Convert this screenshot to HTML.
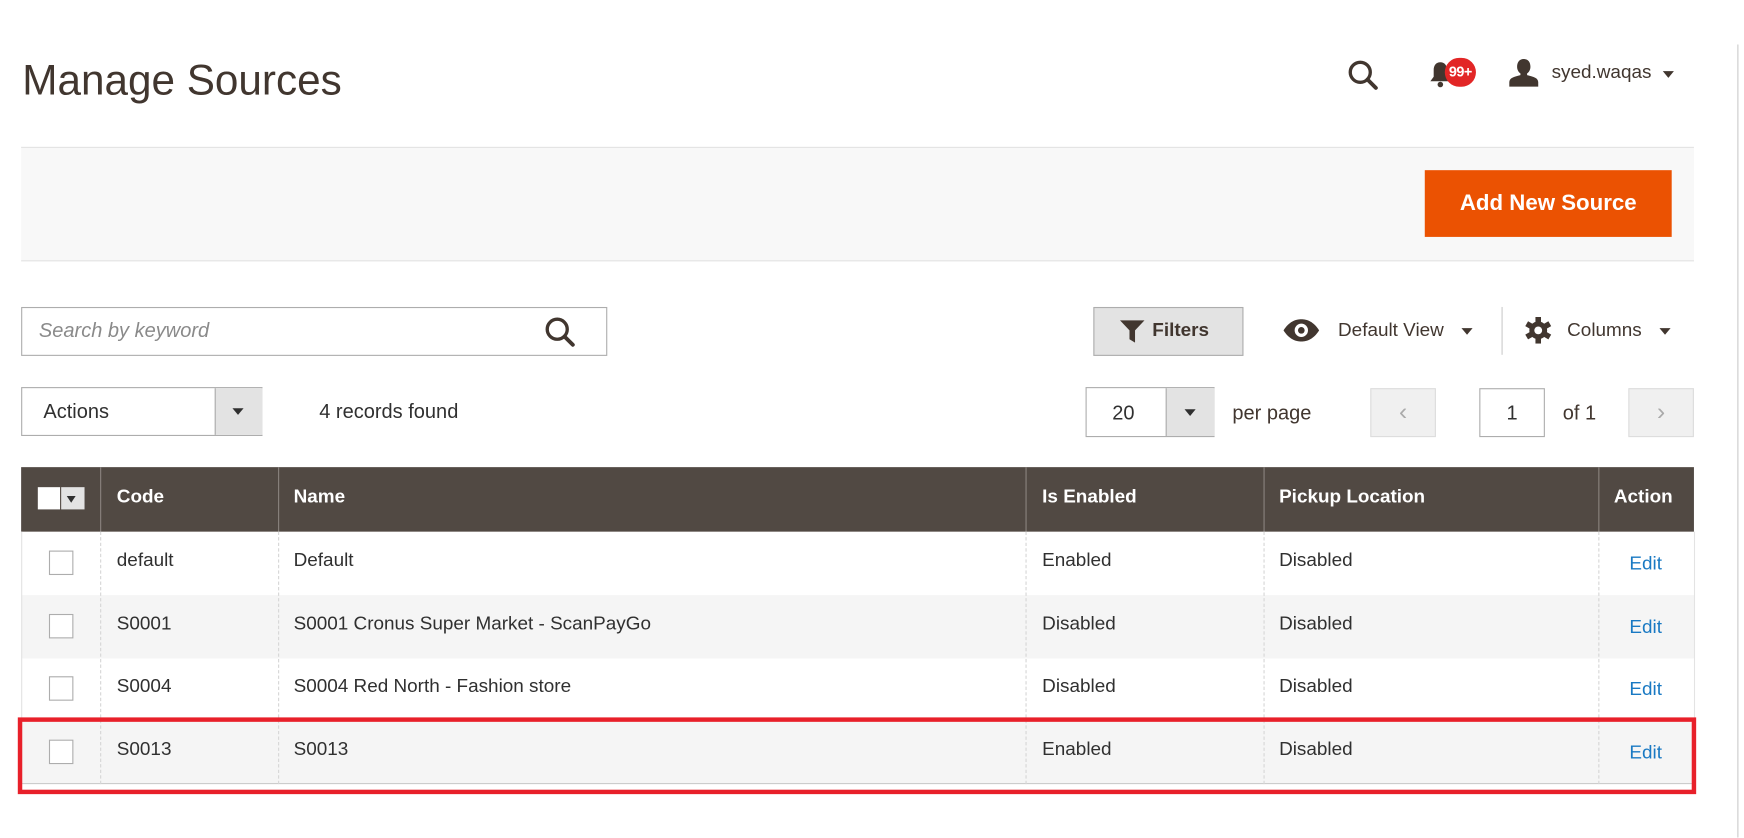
<!DOCTYPE html>
<html><head><meta charset="utf-8"><style>
html,body{margin:0;padding:0;background:#fff;width:1744px;height:838px;overflow:hidden}
#w{position:absolute;left:0;top:0;width:1568px;height:753px;transform:scale(1.11224);transform-origin:0 0;font-family:"Liberation Sans",sans-serif;color:#303030}
.a{position:absolute}
.t{font-size:17px;line-height:20px;white-space:nowrap}
.caret{position:absolute;width:0;height:0;border-left:5px solid transparent;border-right:5px solid transparent;border-top:6px solid #41362f}
.cb{position:absolute;left:44px;width:20px;height:20px;border:1px solid #adadad;background:#fff}
.vl{position:absolute;top:478px;height:227px;border-left:1px dashed #d6d6d6}
.hl{position:absolute;top:420px;height:58px;border-left:1px solid #8a837e}
.th{position:absolute;top:437px;color:#fff;font-weight:bold;font-size:17px}
.edit{color:#1979c3}
</style></head><body><div id="w">
<div class="a" style="left:20px;top:50px;font-size:38px;color:#41362f;line-height:46px">Manage Sources</div>
<div class="a" style="left:1562px;top:40px;width:1px;height:713px;background:#ccc"></div>
<svg class="a" style="left:1210px;top:52px" width="32" height="32" viewBox="0 0 32 32"><circle cx="13" cy="13" r="9" fill="none" stroke="#41362f" stroke-width="3"/><line x1="19.5" y1="19.5" x2="27" y2="27" stroke="#41362f" stroke-width="3.5" stroke-linecap="round"/></svg>
<svg class="a" style="left:1284px;top:54px" width="22" height="26" viewBox="0 0 22 26"><path d="M11 2c-4 0-6 3-6 7v6l-3 4h18l-3-4V9c0-4-2-7-6-7z" fill="#41362f"/><circle cx="11" cy="22" r="2.5" fill="#41362f"/></svg>
<div class="a" style="left:1299px;top:52px;width:28px;height:26px;border-radius:13px;background:#e22626;color:#fff;font-weight:bold;font-size:13px;line-height:26px;text-align:center;letter-spacing:-0.5px">99+</div>
<svg class="a" style="left:1356px;top:52px" width="28" height="26" viewBox="0 0 28 26"><path d="M14 1c-4 0-6 3-6 7 0 3 1.5 5 3 6v1.5C5 17 1 18 1 22v4h26v-4c0-4-4-5-10-6.5V14c1.5-1 3-3 3-6 0-4-2-7-6-7z" fill="#41362f"/></svg>
<div class="a t" style="left:1395px;top:55px;color:#41362f">syed.waqas</div>
<div class="caret" style="left:1495px;top:64px"></div>
<div class="a" style="left:19px;top:132px;width:1504px;height:101px;background:#f8f8f8;border-top:1px solid #e3e3e3;border-bottom:1px solid #e3e3e3"></div>
<div class="a" style="left:1281px;top:153px;width:222px;height:60px;background:#eb5202;color:#fff;font-weight:bold;font-size:20px;line-height:60px;text-align:center">Add New Source</div>
<div class="a" style="left:19px;top:276px;width:525px;height:42px;border:1px solid #adadad"></div>
<div class="a t" style="left:35px;top:287px;font-style:italic;color:#8a8a8a;font-size:18px">Search by keyword</div>
<svg class="a" style="left:488px;top:283px" width="32" height="32" viewBox="0 0 32 32"><circle cx="13" cy="13" r="9" fill="none" stroke="#41362f" stroke-width="3"/><line x1="19.5" y1="19.5" x2="27" y2="27" stroke="#41362f" stroke-width="3.5" stroke-linecap="round"/></svg>
<div class="a" style="left:983px;top:276px;width:133px;height:42px;background:#e3e3e3;border:1px solid #adadad"></div>
<svg class="a" style="left:1006px;top:287px" width="24" height="22" viewBox="0 0 24 22"><path d="M1 1h22l-8.5 9v11l-5-3v-8z" fill="#41362f"/></svg>
<div class="a t" style="left:1036px;top:287px;color:#41362f;font-weight:bold">Filters</div>
<svg class="a" style="left:1153px;top:286px" width="34" height="22" viewBox="0 0 34 22"><path d="M1 11C6 3 12 1 17 1s11 2 16 10c-5 8-11 10-16 10S6 19 1 11z" fill="#41362f"/><circle cx="17" cy="11" r="6" fill="#fff"/><circle cx="17" cy="11" r="3" fill="#41362f"/></svg>
<div class="a t" style="left:1203px;top:287px;color:#41362f">Default View</div>
<div class="caret" style="left:1314px;top:295px"></div>
<div class="a" style="left:1350px;top:276px;width:1px;height:43px;background:#ccc"></div>
<svg class="a" style="left:1371px;top:285px" width="24" height="24" viewBox="0 0 24 24"><g fill="#41362f"><rect x="9.5" y="0" width="5" height="24"/><rect x="9.5" y="0" width="5" height="24" transform="rotate(60 12 12)"/><rect x="9.5" y="0" width="5" height="24" transform="rotate(120 12 12)"/><circle cx="12" cy="12" r="8"/></g><circle cx="12" cy="12" r="3.5" fill="#fff"/></svg>
<div class="a t" style="left:1409px;top:287px;color:#41362f">Columns</div>
<div class="caret" style="left:1492px;top:295px"></div>
<div class="a" style="left:19px;top:348px;width:215px;height:42px;border:1px solid #adadad;background:#fff"></div>
<div class="a" style="left:193px;top:349px;width:42px;height:42px;background:#e3e3e3;border-left:1px solid #adadad"></div>
<div class="caret" style="left:209px;top:367px;border-top-color:#303030"></div>
<div class="a t" style="left:39px;top:360px;font-size:18px">Actions</div>
<div class="a t" style="left:287px;top:360px;font-size:18px">4 records found</div>
<div class="a" style="left:976px;top:348px;width:114px;height:43px;border:1px solid #adadad;background:#fff"></div>
<div class="a" style="left:1048px;top:349px;width:43px;height:43px;background:#e3e3e3;border-left:1px solid #adadad"></div>
<div class="caret" style="left:1065px;top:368px;border-top-color:#303030"></div>
<div class="a t" style="left:1000px;top:361px;font-size:18px">20</div>
<div class="a t" style="left:1108px;top:361px;font-size:18px;color:#41362f">per page</div>
<div class="a" style="left:1232px;top:349px;width:57px;height:42px;background:#f0f0f0;border:1px solid #ddd;color:#aaa;font-size:22px;line-height:40px;text-align:center">&#8249;</div>
<div class="a" style="left:1330px;top:349px;width:57px;height:42px;border:1px solid #adadad;text-align:center;font-size:18px;line-height:42px">1</div>
<div class="a t" style="left:1405px;top:361px;font-size:18px;color:#41362f">of 1</div>
<div class="a" style="left:1464px;top:349px;width:57px;height:42px;background:#f0f0f0;border:1px solid #ddd;color:#aaa;font-size:22px;line-height:40px;text-align:center">&#8250;</div>
<div class="a" style="left:19px;top:420px;width:1504px;height:58px;background:#514943"></div>
<div class="a" style="left:19px;top:535px;width:1504px;height:57px;background:#f5f5f5"></div>
<div class="a" style="left:19px;top:649px;width:1504px;height:56px;background:#f5f5f5"></div>
<div class="a" style="left:19px;top:478px;width:1503px;height:226px;border-left:1px solid #e3e3e3;border-right:1px solid #e3e3e3;border-bottom:1px solid #ccc"></div>
<div class="hl" style="left:90px"></div><div class="hl" style="left:250px"></div><div class="hl" style="left:922px"></div><div class="hl" style="left:1136px"></div><div class="hl" style="left:1437px"></div>
<div class="vl" style="left:90px"></div><div class="vl" style="left:250px"></div><div class="vl" style="left:922px"></div><div class="vl" style="left:1136px"></div><div class="vl" style="left:1437px"></div>
<div class="a" style="left:34px;top:438px;width:20px;height:20px;background:#fff"></div>
<div class="a" style="left:55px;top:438px;width:21px;height:20px;background:#e3e3e3"></div>
<div class="caret" style="left:60px;top:446px;border-top-color:#303030;border-left-width:4px;border-right-width:4px"></div>
<div class="th" style="left:105px">Code</div><div class="th" style="left:264px">Name</div><div class="th" style="left:937px">Is Enabled</div><div class="th" style="left:1150px">Pickup Location</div><div class="th" style="left:1451px">Action</div>
<div class="cb" style="top:495px"></div><div class="cb" style="top:552px"></div><div class="cb" style="top:608px"></div><div class="cb" style="top:665px"></div>
<div class="a t" style="left:105px;top:494px">default</div><div class="a t" style="left:264px;top:494px">Default</div><div class="a t" style="left:937px;top:494px">Enabled</div><div class="a t" style="left:1150px;top:494px">Disabled</div><div class="a t edit" style="left:1465px;top:497px">Edit</div>
<div class="a t" style="left:105px;top:551px">S0001</div><div class="a t" style="left:264px;top:551px">S0001 Cronus Super Market - ScanPayGo</div><div class="a t" style="left:937px;top:551px">Disabled</div><div class="a t" style="left:1150px;top:551px">Disabled</div><div class="a t edit" style="left:1465px;top:554px">Edit</div>
<div class="a t" style="left:105px;top:607px">S0004</div><div class="a t" style="left:264px;top:607px">S0004 Red North - Fashion store</div><div class="a t" style="left:937px;top:607px">Disabled</div><div class="a t" style="left:1150px;top:607px">Disabled</div><div class="a t edit" style="left:1465px;top:610px">Edit</div>
<div class="a t" style="left:105px;top:664px">S0013</div><div class="a t" style="left:264px;top:664px">S0013</div><div class="a t" style="left:937px;top:664px">Enabled</div><div class="a t" style="left:1150px;top:664px">Disabled</div><div class="a t edit" style="left:1465px;top:667px">Edit</div>
<div class="a" style="left:16px;top:645px;width:1501px;height:61px;border:4px solid #e8202a"></div>
</div></body></html>
